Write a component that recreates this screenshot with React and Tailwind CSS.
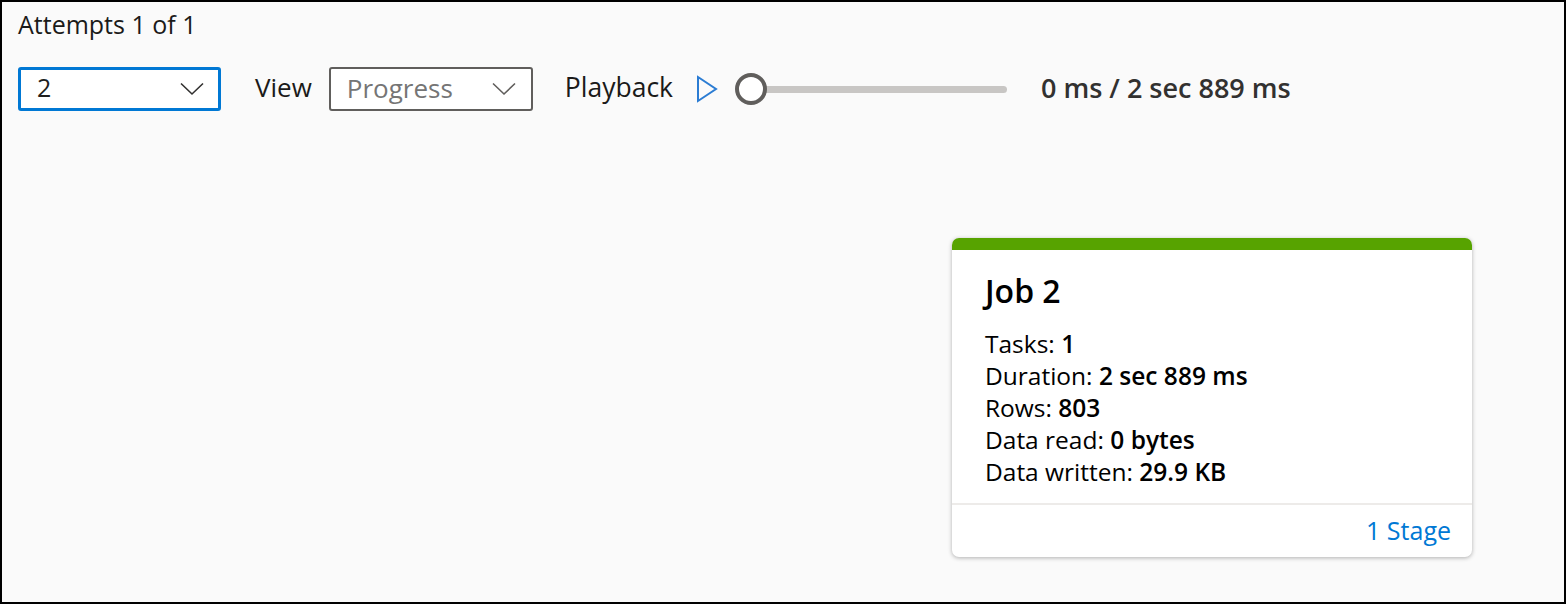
import React from "react";

function Chevron({ color = "#323130" }) {
  return (
    <svg width="24" height="14" viewBox="0 0 24 14" fill="none">
      <polyline points="1,1.5 12,12 23,1.5" stroke={color} strokeWidth="1.6" fill="none" />
    </svg>
  );
}

export default function App() {
  const font = { fontFamily: '"Open Sans", "Noto Sans", sans-serif' };
  return (
    <div
      className="relative w-[1566px] h-[604px] border-2 border-black bg-[#fafafa] overflow-hidden"
      style={font}
    >
      <div className="pl-[16px] pt-[6px]">
        <div className="text-[25px] leading-[32px] text-[#1b1a19]">Attempts 1 of 1</div>
        <div className="mt-[27px] flex items-center h-[44px]">
          <div className="w-[203px] h-[44px] border-[3px] border-[#0078d4] rounded-[3px] bg-white flex items-center justify-between pl-[16px] pr-[14px]">
            <span className="text-[25px] leading-none text-[#201f1e] mb-[3px]">2</span>
            <Chevron />
          </div>
          <span className="ml-[34px] text-[26px] leading-none text-[#1b1a19] mb-[4px]">View</span>
          <div className="ml-[17px] w-[204px] h-[44px] border-2 border-[#605e5c] rounded-[3px] bg-white flex items-center justify-between pl-[16px] pr-[15px]">
            <span className="text-[26px] leading-none text-[#757575] mb-[3px]">Progress</span>
            <Chevron color="#605e5c" />
          </div>
          <span className="ml-[32px] text-[26.5px] leading-none text-[#1b1a19] mb-[4px]">Playback</span>
          <svg className="ml-[23px]" width="22" height="28" viewBox="0 0 22 28" fill="none">
            <polygon points="2,2 20,14 2,26" stroke="#2b7cd3" strokeWidth="2" fill="none" strokeLinejoin="miter" />
          </svg>
          <div className="ml-[17px] relative w-[272px] h-[32px] flex items-center">
            <div className="absolute left-[16px] right-0 h-[7px] rounded-full bg-[#c8c6c4]" />
            <div className="relative w-[32px] h-[32px] rounded-full border-[4px] border-[#605e5c] bg-white" />
          </div>
          <span className="ml-[34px] text-[27px] leading-none font-semibold text-[#323130] mb-[3px]">
            0 ms / 2 sec 889 ms
          </span>
        </div>
      </div>

      <div className="absolute left-[950px] top-[236px] w-[520px] h-[319px] bg-white rounded-[7px] shadow-[0_1px_4px_rgba(0,0,0,0.3)] overflow-hidden flex flex-col">
        <div className="h-[12px] bg-[#57a300]" />
        <div className="px-[33px] pt-[21px] pb-[15px] text-black">
          <div className="text-[32px] leading-[40px] font-semibold">Job 2</div>
          <div className="mt-[17px] text-[24.5px] leading-[32px]">
            <div>Tasks: <span className="font-semibold">1</span></div>
            <div>Duration: <span className="font-semibold">2 sec 889 ms</span></div>
            <div>Rows: <span className="font-semibold">803</span></div>
            <div>Data read: <span className="font-semibold">0 bytes</span></div>
            <div>Data written: <span className="font-semibold">29.9 KB</span></div>
          </div>
        </div>
        <div className="h-[2px] bg-[#edebe9]" />
        <div className="flex-1 flex items-center justify-end pr-[21px]">
          <span className="text-[25px] leading-none text-[#0078d4] mb-[2px]">1 Stage</span>
        </div>
      </div>
    </div>
  );
}
